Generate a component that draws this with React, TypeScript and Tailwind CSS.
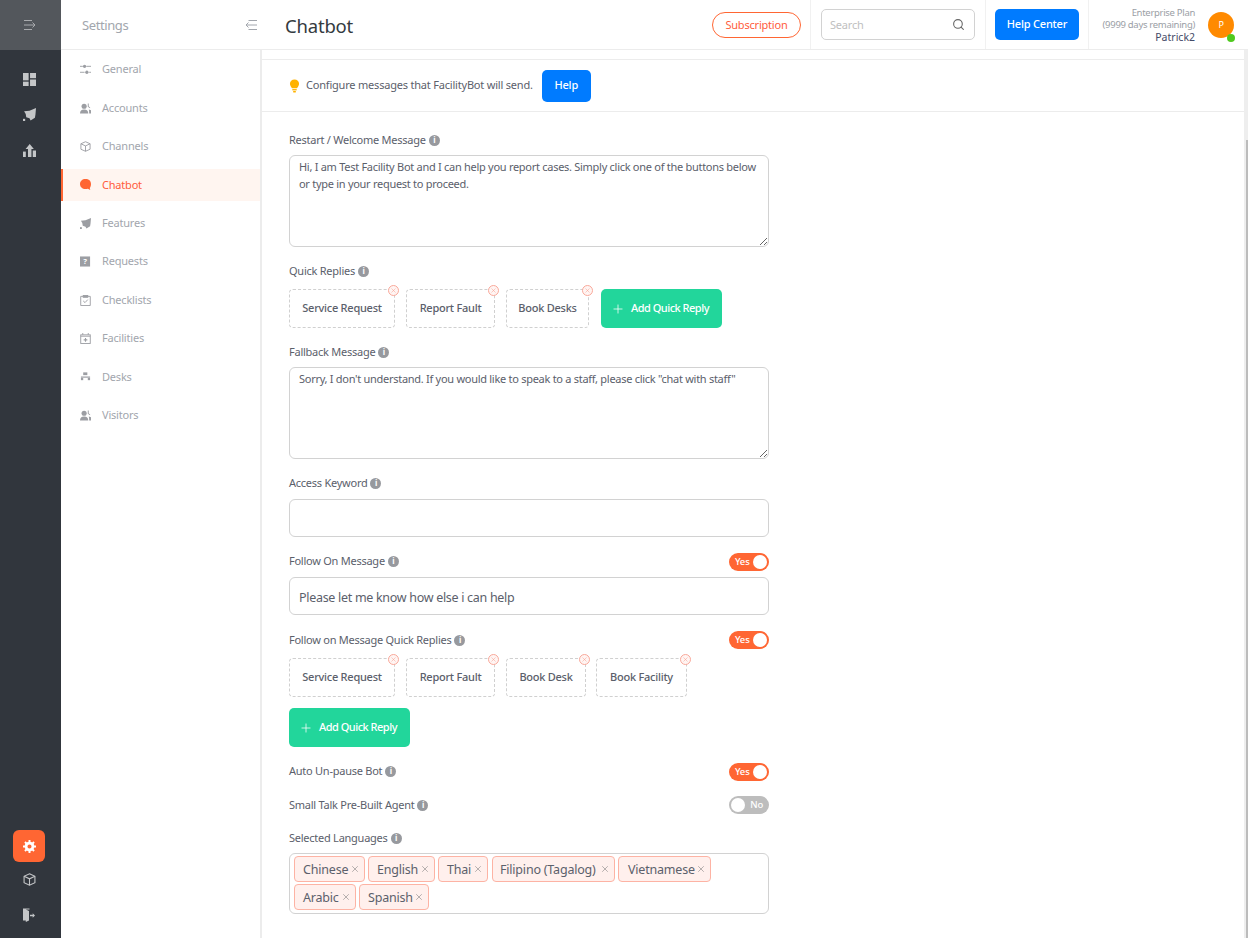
import React from 'react';
import { Search, Plus, X } from 'lucide-react';

type IconProps = { className?: string };

const Sliders = ({ className }: IconProps) => (
  <svg viewBox="0 0 12 12" className={className} fill="currentColor">
    <rect x="0" y="2" width="3" height="1" />
    <circle cx="5" cy="2.500" r="1.800" />
    <rect x="7" y="2" width="5" height="1" />
    <rect x="0" y="8.500" width="5" height="1" />
    <circle cx="7.500" cy="9" r="1.800" />
    <rect x="10" y="8.500" width="2" height="1" />
  </svg>
);

const Users = ({ className }: IconProps) => (
  <svg viewBox="0 0 12 12" className={className} fill="currentColor">
    <circle cx="4.500" cy="3.500" r="2.800" />
    <path d="M0 11.500C0 8.500 1.500 7 4.500 7S9 8.500 9 11.500Z" />
    <path d="M8.500 0.500h1v3.200l1.500 1v1L8.500 4.200Z" />
    <path d="M9.600 7 12 8v3.500h-2C10 9.500 10 8.500 9.600 7Z" />
  </svg>
);

const Cube = ({ className }: IconProps) => (
  <svg viewBox="0 0 12 12" className={className} fill="none" stroke="currentColor" strokeWidth="1">
    <path d="M6 .8 11 3v6L6 11.200 1 9V3Z" />
    <path d="M1 3l5 2.400L11 3M6 5.400v5.800" />
  </svg>
);

const Bubble = ({ className }: IconProps) => (
  <svg viewBox="0 0 12 12" className={className} fill="currentColor">
    <path d="M6 0C9.600 0 12 2.200 12 5.400c0 1.900-.5 3.300-1.300 4.300l.5 2.300-2.600-1.300C7.800 10.900 6.800 11 6 11 2.500 11 0 8.700 0 5.500S2.500 0 6 0Z" />
  </svg>
);

const Rocket = ({ className }: IconProps) => (
  <svg viewBox="0 0 12 12" className={className} fill="currentColor">
    <path d="M1 3 6 2.500 12 0 11.500 6 11 9 7 11.500 6 9.500 3 8.500 2.500 5.500Z" />
    <rect x="0" y="10" width="2" height="2" />
  </svg>
);

const Question = ({ className }: IconProps) => (
  <svg viewBox="0 0 12 12" className={className}>
    <rect width="11" height="11" y=".5" fill="currentColor" />
    <text x="5.500" y="9" textAnchor="middle" fontSize="8.500" fontWeight="700" fill="#fff" fontFamily="Noto Sans, sans-serif">?</text>
  </svg>
);

const ClipCheck = ({ className }: IconProps) => (
  <svg viewBox="0 0 12 12" className={className} fill="none" stroke="currentColor">
    <path d="M3.500 1.500H.8v10h10.400v-10H8.500" />
    <rect x="3.500" y=".5" width="5" height="2" fill="currentColor" />
    <path d="m3.500 6.500 2 1.800 3-3.300" />
  </svg>
);

const CalendarPlus = ({ className }: IconProps) => (
  <svg viewBox="0 0 12 12" className={className} fill="none" stroke="currentColor">
    <rect x=".8" y="2" width="10.400" height="9.400" />
    <path d="M3 0v2M9 0v2M.8 3.500h10.400" />
    <path d="M6 5.500v4M4 7.500h4" strokeWidth="1.200" />
  </svg>
);

const Desk = ({ className }: IconProps) => (
  <svg viewBox="0 0 12 12" className={className} fill="currentColor">
    <rect x="3.500" y="1.500" width="4.500" height="3" />
    <rect x="1" y="6" width="10" height="1.300" />
    <rect x="1" y="7.500" width="2.500" height="2.500" />
    <rect x="8.500" y="7.500" width="2.500" height="2.500" />
  </svg>
);

const Dashboard = ({ className }: IconProps) => (
  <svg viewBox="0 0 12 12" className={className} fill="currentColor">
    <rect x="0" y="0" width="5.200" height="6.800" />
    <rect x="6.500" y="0" width="5.500" height="4.800" />
    <rect x="0" y="8" width="5.200" height="4" />
    <rect x="6.500" y="6" width="5.500" height="6" />
  </svg>
);

const Chart = ({ className }: IconProps) => (
  <svg viewBox="0 0 12 12" className={className} fill="currentColor">
    <rect x="0" y="7" width="2.600" height="5" />
    <path d="M6.200 0 10 4.500H7.800V12H4.600V4.500H2.400Z" />
    <rect x="9" y="6" width="3" height="6" />
  </svg>
);

const Gear = ({ className }: IconProps) => (
  <svg viewBox="0 0 12 12" className={className} fill="none" stroke="currentColor">
    <circle cx="6" cy="6" r="3.200" strokeWidth="2.600" />
    <path d="M6 0v2.200M6 9.800V12M0 6h2.200M9.800 6H12M1.800 1.800l1.500 1.500M8.700 8.700l1.500 1.500M1.800 10.200l1.500-1.500M8.700 3.300l1.500-1.500" strokeWidth="1.800" />
  </svg>
);

const Exit = ({ className }: IconProps) => (
  <svg viewBox="0 0 12 14" className={className} fill="currentColor">
    <path d="M0 .5h6.500v1H2.800L6 3v9.500L2.800 14V12.500H0Z" />
    <path d="M7 6.800h2.700V5.200L12 7.500 9.700 9.800V8.200H7Z" />
  </svg>
);

const MenuArrow = ({ className }: IconProps) => (
  <svg viewBox="0 0 12 12" className={className} fill="none" stroke="currentColor" strokeWidth="1">
    <path d="M0 1.500h8M0 6h11M0 10.500h8M8.500 3.500 11 6 8.500 8.500" />
  </svg>
);

const MenuBack = ({ className }: IconProps) => (
  <svg viewBox="0 0 12 12" className={className} fill="none" stroke="currentColor" strokeWidth="1">
    <path d="M3.500 1.500H12M1 6h11M3.500 10.500H12M3.500 3.500 1 6l2.500 2.500" />
  </svg>
);

const Bulb = ({ className }: IconProps) => (
  <svg viewBox="0 0 12 16" className={className} fill="currentColor">
    <path d="M6 .5c3 0 5.200 2.100 5.200 4.900 0 2.300-1.500 3.400-2.300 5.100H3.100C2.300 8.800.8 7.700.8 5.400.8 2.600 3 .5 6 .5Z" />
    <rect x="3.500" y="11.500" width="5" height="1.500" />
    <rect x="4.300" y="13.800" width="3.400" height="1.500" rx=".7" />
  </svg>
);

const Info = () => (
  <span className="ml-[3px] flex h-[11px] w-[11px] items-center justify-center rounded-full bg-[#97999e] text-[8px] leading-none font-bold text-white">
    i
  </span>
);

const Label = ({ text, className }: { text: string; className?: string }) => (
  <div className={`flex h-4 items-center text-[11px] tracking-[-0.25px] text-[#5b606b] ${className ?? ''}`}>
    {text}
    <Info />
  </div>
);

const Toggle = ({ on }: { on: boolean }) =>
  on ? (
    <div className="flex h-[18px] w-10 items-center justify-between rounded-full bg-[#ff6633] pr-[2px] pl-[6px]">
      <span className="text-[9.500px] font-medium text-white">Yes</span>
      <span className="h-[14px] w-[14px] rounded-full bg-white" />
    </div>
  ) : (
    <div className="flex h-[18px] w-10 items-center justify-between rounded-full bg-[#bdbdbd] pr-[6px] pl-[2px]">
      <span className="h-[14px] w-[14px] rounded-full bg-white" />
      <span className="text-[9.500px] font-medium text-white">No</span>
    </div>
  );

const Chip = ({ text, width }: { text: string; width: string }) => (
  <div className={`relative flex h-[39px] items-center justify-center rounded-[4px] border border-dashed border-[#d0d0d0] text-[11px] font-medium tracking-[-0.25px] text-[#5b606b] ${width}`}>
    {text}
    <span className="absolute -top-[5px] -right-[5px] flex h-[11px] w-[11px] items-center justify-center rounded-full border border-[#f9a89a] bg-[#fff5f3] text-[#f58f7e]">
      <X size={7} strokeWidth={1.500} />
    </span>
  </div>
);

const AddReply = ({ className }: { className?: string }) => (
  <div className={`flex h-[39px] w-[121px] items-center justify-center gap-[6px] rounded-[5px] bg-[#22d69b] pr-[3px] text-[11px] font-medium tracking-[-0.5px] text-white ${className ?? ''}`}>
    <Plus size={14} strokeWidth={1.300} />
    Add Quick Reply
  </div>
);

const Tag = ({ text, box }: { text: string; box: string }) => (
  <span className={`flex h-[26px] items-center justify-between whitespace-nowrap rounded-[4px] border border-[#fdb3a4] bg-[#fff0ed] pr-[4px] text-[12.500px] tracking-[-0.2px] text-[#5b606b] ${box}`}>
    <span className="pt-[3px]">{text}</span>
    <X size={10} strokeWidth={1.300} className="text-[#777]" />
  </span>
);

const menu = [
  { name: 'General', Icon: Sliders },
  { name: 'Accounts', Icon: Users },
  { name: 'Channels', Icon: Cube },
  { name: 'Chatbot', Icon: Bubble, active: true },
  { name: 'Features', Icon: Rocket },
  { name: 'Requests', Icon: Question },
  { name: 'Checklists', Icon: ClipCheck },
  { name: 'Facilities', Icon: CalendarPlus },
  { name: 'Desks', Icon: Desk },
  { name: 'Visitors', Icon: Users },
];

const fieldClass = 'block w-full rounded-[6px] border border-[#d2d2d2] bg-white px-[9px] text-[#5b606b] outline-none';

const App: React.FC = () => {
  return (
    <div className="flex h-[938px] w-[1248px] overflow-hidden bg-white font-['Noto_Sans',sans-serif] tracking-[-0.2px]">
      {/* dark rail */}
      <div className="flex w-[61px] shrink-0 flex-col items-center bg-[#31363d] pr-[3px] text-[#c4c6c8]">
        <div className="-mr-[3px] flex h-[50px] w-[61px] items-center justify-center bg-[#53575c] pr-[2px] text-[#a9abae]">
          <MenuArrow className="h-3 w-3" />
        </div>
        <Dashboard className="mt-[23px] h-[13px] w-[13px]" />
        <Rocket className="mt-[22px] h-[13px] w-[13px]" />
        <Chart className="mt-[23px] h-[13px] w-[13px]" />
        <div className="mt-auto flex h-8 w-8 items-center justify-center rounded-[6px] bg-[#ff6633] text-white">
          <Gear className="h-[13px] w-[13px]" />
        </div>
        <Cube className="mt-[11px] h-[13px] w-[13px]" />
        <Exit className="mt-[22px] mb-[16px] h-[14px] w-3" />
      </div>

      <div className="flex min-w-0 flex-1 flex-col">
        {/* header */}
        <div className="flex h-[50px] shrink-0 items-center border-b border-[#ececec]">
          <div className="flex w-[201px] items-center justify-between pr-[5px] pl-[21px] text-[#a2a6ad]">
            <span className="mt-[2px] text-[13px] tracking-[-0.4px]">Settings</span>
            <MenuBack className="h-3 w-3" />
          </div>
          <h1 className="mt-[3px] ml-[23px] text-[18.500px] text-[#343a40]">Chatbot</h1>
          <div className="ml-auto flex h-full items-center">
            <div className="flex h-[26px] w-[89px] items-center justify-center rounded-full border border-[#ff6633] pt-px text-[11px] text-[#ff5c3c]">
              Subscription
            </div>
            <div className="ml-[9px] h-full border-l border-[#f1f1f1]" />
            <div className="ml-[10px] flex h-[31px] w-[154px] items-center justify-between rounded-[5px] border border-[#d2d2d2] pr-[9px] pl-[8px] text-[11px] text-[#c0c0c0]">
              <span className="pt-px">Search</span>
              <Search size={13} className="text-[#666]" />
            </div>
            <div className="ml-[10px] h-full border-l border-[#f1f1f1]" />
            <div className="ml-[9px] flex h-[31px] w-[84px] items-center justify-center rounded-[5px] bg-[#007bff] text-[11px] font-medium text-white">
              Help Center
            </div>
            <div className="ml-[9px] h-full border-l border-[#f1f1f1]" />
            <div className="ml-[6px] w-[100px] text-right leading-[12px] tracking-[-0.3px]">
              <div className="text-[9.500px] text-[#9a9ea5]">Enterprise Plan</div>
              <div className="text-[9.500px] text-[#9a9ea5]">(9999 days remaining)</div>
              <div className="text-[10.500px] tracking-normal text-[#444a68]">Patrick2</div>
            </div>
            <div className="relative mr-[14px] ml-[13px] flex h-[26px] w-[26px] items-center justify-center rounded-full bg-[#ff8a00] text-[9px] text-white">
              P
              <span className="absolute -right-[1px] -bottom-[4px] h-[8px] w-[8px] rounded-full bg-[#4fc91e]" />
            </div>
          </div>
        </div>

        <div className="flex min-h-0 flex-1">
          {/* settings menu */}
          <div className="w-[201px] shrink-0 border-r-2 border-[#ececec] pt-[3.700px]">
            {menu.map(({ name, Icon, active }) => (
              <div
                key={name}
                className={`mb-[6.400px] flex h-8 items-center border-l-2 pl-[17px] text-[11px] ${
                  active ? 'border-[#ff6633] bg-[#fff5f0] text-[#ff5c3c]' : 'border-transparent text-[#a2a6ad]'
                }`}
              >
                <Icon className={`h-[11px] w-[11px] ${active ? 'text-[#ff6633]' : 'text-[#9c9ea3]'}`} />
                <span className="ml-[11px]">{name}</span>
              </div>
            ))}
          </div>

          {/* page content */}
          <div className="min-w-0 flex-1">
            <div className="h-[10px] border-b border-[#ececec]" />
            <div className="flex h-[52px] items-center border-b border-[#ececec] pl-[27px]">
              <Bulb className="h-[14px] w-[11px] text-[#ffb300]" />
              <span className="ml-[6px] text-[11px] text-[#5b606b]">Configure messages that FacilityBot will send.</span>
              <div className="ml-[9px] flex h-8 w-[49px] items-center justify-center rounded-[5px] bg-[#007bff] text-[11px] font-medium text-white">
                Help
              </div>
            </div>

            <div className="ml-[27px] w-[480px] pt-[20px]">
              <Label text="Restart / Welcome Message" />
              <textarea
                readOnly
                className={`${fieldClass} mt-[7px] h-[92px] py-[2px] text-[11px] leading-[17px] tracking-[-0.28px]`}
                defaultValue="Hi, I am Test Facility Bot and I can help you report cases. Simply click one of the buttons below or type in your request to proceed."
              />

              <Label text="Quick Replies" className="mt-4" />
              <div className="mt-[10px] flex gap-[11px]">
                <Chip text="Service Request" width="w-[106px]" />
                <Chip text="Report Fault" width="w-[89px]" />
                <Chip text="Book Desks" width="w-[83px]" />
                <AddReply className="ml-px" />
              </div>

              <Label text="Fallback Message" className="mt-4" />
              <textarea
                readOnly
                className={`${fieldClass} mt-[7px] h-[92px] py-[2px] text-[11px] leading-[17px] tracking-[-0.28px]`}
                defaultValue={'Sorry, I don\'t understand. If you would like to speak to a staff, please click "chat with staff"'}
              />

              <Label text="Access Keyword" className="mt-4" />
              <div className={`${fieldClass} mt-2 h-[38px]`} />

              <div className="mt-4 flex items-start justify-between">
                <Label text="Follow On Message" />
                <Toggle on />
              </div>
              <div className={`${fieldClass} mt-[6px] flex h-[38px] items-center pt-[4px] text-[12.500px] tracking-[-0.3px]`}>
                Please let me know how else i can help
              </div>

              <div className="mt-[16px] flex items-center justify-between">
                <Label text="Follow on Message Quick Replies" />
                <Toggle on />
              </div>
              <div className="mt-[9px] flex gap-[11px]">
                <Chip text="Service Request" width="w-[106px]" />
                <Chip text="Report Fault" width="w-[89px]" />
                <Chip text="Book Desk" width="w-[80px]" />
                <Chip text="Book Facility" width="-ml-px w-[91px]" />
              </div>
              <div className="mt-[11px]">
                <AddReply />
              </div>

              <div className="mt-[16px] flex items-start justify-between">
                <Label text="Auto Un-pause Bot" />
                <Toggle on />
              </div>
              <div className="mt-[15px] flex items-center justify-between">
                <Label text="Small Talk Pre-Built Agent" />
                <Toggle on={false} />
              </div>
              <Label text="Selected Languages" className="mt-[16px]" />
              <div className="mt-[7px] flex h-[61px] flex-wrap content-start gap-x-[3px] gap-y-[2px] rounded-[6px] border border-[#d2d2d2] px-1 pt-[2px]">
                <Tag text="Chinese" box="w-[71px] pl-[8px]" />
                <Tag text="English" box="w-[67px] pl-[8px]" />
                <Tag text="Thai" box="w-[50px] pl-[8px]" />
                <Tag text="Filipino (Tagalog)" box="ml-px w-[123px] pl-[7px]" />
                <Tag text="Vietnamese" box="w-[93px] pl-[9px]" />
                <Tag text="Arabic" box="w-[62px] pl-[8px]" />
                <Tag text="Spanish" box="w-[70px] pl-[8px]" />
              </div>
            </div>
          </div>

          {/* scrollbar */}
          <div className="w-1 shrink-0 bg-[#eeeeee] pt-[90px] pl-[2px]">
            <div className="h-full bg-[#bcbcbc]" />
          </div>
        </div>
      </div>
    </div>
  );
};

export default App;
